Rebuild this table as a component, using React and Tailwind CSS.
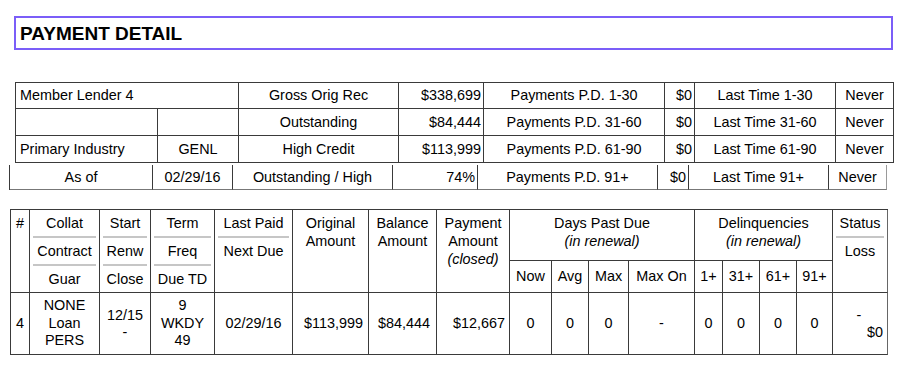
import React from 'react';

const font = { fontFamily: '"Liberation Sans", Arial, Helvetica, sans-serif' };

const summaryRows = [
    [
        { text: 'Member Lender 4', span: true, align: 'left' },
        { text: 'Gross Orig Rec' },
        { text: '$338,699', align: 'right' },
        { text: 'Payments P.D. 1-30' },
        { text: '$0', align: 'right' },
        { text: 'Last Time 1-30' },
        { text: 'Never' },
    ],
    [
        { text: '' },
        { text: '' },
        { text: 'Outstanding' },
        { text: '$84,444', align: 'right' },
        { text: 'Payments P.D. 31-60' },
        { text: '$0', align: 'right' },
        { text: 'Last Time 31-60' },
        { text: 'Never' },
    ],
    [
        { text: 'Primary Industry', align: 'left' },
        { text: 'GENL' },
        { text: 'High Credit' },
        { text: '$113,999', align: 'right' },
        { text: 'Payments P.D. 61-90' },
        { text: '$0', align: 'right' },
        { text: 'Last Time 61-90' },
        { text: 'Never' },
    ],
];

const lastRow = [
    { text: 'As of' },
    { text: '02/29/16' },
    { text: 'Outstanding / High' },
    { text: '74%', align: 'right' },
    { text: 'Payments P.D. 91+' },
    { text: '$0', align: 'right' },
    { text: 'Last Time 91+' },
    { text: 'Never', last: true },
];

const alignClass = (align) =>
    align === 'left' ? 'justify-start pl-[4px]' : align === 'right' ? 'justify-end pr-[2px]' : 'justify-center';

function Stack({ items }) {
    return (
        <div className="flex flex-col">
            {items.map((t, i) => (
                <React.Fragment key={i}>
                    {i > 0 && <div className="mx-[3px] h-[2px] bg-[#c6c6c6]" />}
                    <div className="h-[26px] flex items-center justify-center whitespace-nowrap">{t}</div>
                </React.Fragment>
            ))}
        </div>
    );
}

export default function App() {
    const bc = 'border-r border-b border-[#3a3a3a]';

    return (
        <div className="w-[906px] h-[372px] bg-white text-black text-[14.4px] leading-none overflow-hidden" style={font}>
            {/* Title */}
            <div className="pt-[16px]">
                <div className="ml-[14px] w-[879px] h-[34px] border-2 border-[#7b5ef8] flex items-center pl-[4px]">
                    <span className="text-[19px] font-bold tracking-[0px]">PAYMENT DETAIL</span>
                </div>
            </div>

            {/* Summary table */}
            <div className="mt-[32px] ml-[15px] w-[879px] grid grid-cols-[142px_81px_160px_85px_181px_30px_141px_58px] grid-rows-[26px_27px_27px] border-l border-t border-[#3a3a3a]">
                {summaryRows.map((row, r) =>
                    row.map((c, i) => (
                        <div
                            key={`${r}-${i}`}
                            className={`${bc} flex items-center whitespace-nowrap ${c.span ? 'col-span-2' : ''} ${alignClass(c.align)}`}
                        >
                            {c.text}
                        </div>
                    ))
                )}
            </div>

            {/* As of row */}
            <div className="mt-[2px] ml-[9px] w-[878px] h-[25px] grid grid-cols-[143px_80px_160px_85px_180px_31px_140px_58px] border-l border-[#3a3a3a]">
                {lastRow.map((c, i) => (
                    <div
                        key={i}
                        className={`border-b border-b-[#777] border-r ${c.last ? 'border-r-[#9a9a9a]' : 'border-r-[#3a3a3a]'} flex items-center whitespace-nowrap ${alignClass(c.align)}`}
                    >
                        {c.text}
                    </div>
                ))}
            </div>

            {/* Loan detail table */}
            <div className="mt-[19px] ml-[10px] w-[878px] grid grid-cols-[19px_70px_51px_64px_78px_76px_68px_73px_42px_37px_40px_66px_28px_37px_37px_36px_55px] grid-rows-[51px_32px_62px] border-l border-t border-[#3a3a3a]">
                {/* header */}
                <div className={`${bc} row-span-2`}>
                    <div className="h-[26px] flex items-center justify-center">#</div>
                </div>
                <div className={`${bc} row-span-2`}><Stack items={['Collat', 'Contract', 'Guar']} /></div>
                <div className={`${bc} row-span-2`}><Stack items={['Start', 'Renw', 'Close']} /></div>
                <div className={`${bc} row-span-2`}><Stack items={['Term', 'Freq', 'Due TD']} /></div>
                <div className={`${bc} row-span-2`}><Stack items={['Last Paid', 'Next Due']} /></div>
                <div className={`${bc} row-span-2 pt-[4px] leading-[18px] text-center`}>Original<br />Amount</div>
                <div className={`${bc} row-span-2 pt-[4px] leading-[18px] text-center`}>Balance<br />Amount</div>
                <div className={`${bc} row-span-2 pt-[4px] leading-[18px] text-center`}>
                    Payment<br />Amount<br /><span className="italic">(closed)</span>
                </div>
                <div className={`${bc} col-span-4 pt-[4px] leading-[18px] text-center`}>
                    Days Past Due<br /><span className="italic">(in renewal)</span>
                </div>
                <div className={`${bc} col-span-4 pt-[4px] leading-[18px] text-center`}>
                    Delinquencies<br /><span className="italic">(in renewal)</span>
                </div>
                <div className="border-b border-[#3a3a3a] border-r border-r-[#666] row-span-2"><Stack items={['Status', 'Loss']} /></div>

                {['Now', 'Avg', 'Max', 'Max On', '1+', '31+', '61+', '91+'].map((t) => (
                    <div key={t} className={`${bc} flex items-center justify-center whitespace-nowrap`}>{t}</div>
                ))}

                {/* data row */}
                <div className={`${bc} flex items-center justify-center`}>4</div>
                <div className={`${bc} flex flex-col items-center justify-center leading-[17.5px]`}>
                    <span>NONE</span><span>Loan</span><span>PERS</span>
                </div>
                <div className={`${bc} flex flex-col items-center justify-center leading-[17px]`}>
                    <span>12/15</span><span>-</span>
                </div>
                <div className={`${bc} flex flex-col items-center justify-center leading-[17.5px]`}>
                    <span>9</span><span>WKDY</span><span>49</span>
                </div>
                <div className={`${bc} flex items-center justify-center`}>02/29/16</div>
                <div className={`${bc} flex items-center justify-end pr-[5px]`}>$113,999</div>
                <div className={`${bc} flex items-center justify-end pr-[6px]`}>$84,444</div>
                <div className={`${bc} flex items-center justify-end pr-[4px]`}>$12,667</div>
                {['0', '0', '0', '-', '0', '0', '0', '0'].map((t, i) => (
                    <div key={i} className={`${bc} flex items-center justify-center`}>{t}</div>
                ))}
                <div className="border-b border-[#3a3a3a] border-r border-r-[#666] flex flex-col justify-center leading-[17px]">
                    <span className="text-center pr-[2px]">-</span>
                    <span className="text-right pr-[4px]">$0</span>
                </div>
            </div>
        </div>
    );
}
